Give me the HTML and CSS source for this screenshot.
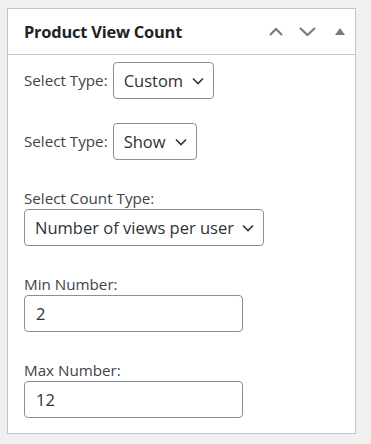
FILE: index.html
```html
<!DOCTYPE html>
<html>
<head>
<meta charset="utf-8">
<link rel="stylesheet" href="styles.css">
</head>
<body>
<div class="postbox">
  <div class="postbox-header">
    <h2 class="hndle">Product View Count</h2>
    <div class="handle-actions">
      <span class="hbtn up"><svg width="14" height="9" viewBox="0 0 14 9"><path d="M1 8 L7 2 L13 8" fill="none" stroke="#787c82" stroke-width="2.2"/></svg></span>
      <span class="hbtn down"><svg width="17" height="9" viewBox="0 0 17 9"><path d="M1 1 L8.5 8 L16 1" fill="none" stroke="#787c82" stroke-width="2.2"/></svg></span>
      <span class="hbtn toggle"><svg width="10" height="7" viewBox="0 0 10 7"><path d="M0 7 L5 0 L10 7 Z" fill="#787c82"/></svg></span>
    </div>
  </div>
  <div class="inside">
    <div class="row inline">
      <label class="lbl">Select Type:</label>
      <div class="select w-custom"><span>Custom</span><svg class="chev" width="12" height="8" viewBox="0 0 12 8"><path d="M1 1.5 L6 6.5 L11 1.5" fill="none" stroke="#2c3338" stroke-width="1.6"/></svg></div>
    </div>
    <div class="row inline second">
      <label class="lbl">Select Type:</label>
      <div class="select w-show"><span>Show</span><svg class="chev" width="12" height="8" viewBox="0 0 12 8"><path d="M1 1.5 L6 6.5 L11 1.5" fill="none" stroke="#2c3338" stroke-width="1.6"/></svg></div>
    </div>
    <div class="row stacked">
      <label class="lbl">Select Count Type:</label>
      <div class="select w-count"><span>Number of views per user</span><svg class="chev" width="12" height="8" viewBox="0 0 12 8"><path d="M1 1.5 L6 6.5 L11 1.5" fill="none" stroke="#2c3338" stroke-width="1.6"/></svg></div>
    </div>
    <div class="row stacked">
      <label class="lbl">Min Number:</label>
      <div class="input">2</div>
    </div>
    <div class="row stacked last">
      <label class="lbl">Max Number:</label>
      <div class="input">12</div>
    </div>
  </div>
</div>
</body>
</html>
```
FILE: styles.css
```css
html, body {
  margin: 0;
  padding: 0;
  background: #f0f0f1;
}
body {
  padding: 8px 15px 0 7px;
  font-family: "Open Sans", "Noto Sans", sans-serif;
  color: #3c434a;
}
.postbox {
  background: #fff;
  border: 1px solid #c3c4c7;
  box-shadow: 0 1px 1px rgba(0,0,0,0.04);
}
.postbox-header {
  height: 45px;
  border-bottom: 1px solid #c3c4c7;
  display: flex;
  align-items: center;
  justify-content: space-between;
}
.hndle {
  margin: 0;
  padding-left: 16px;
  font-size: 16.4px;
  font-weight: 700;
  color: #1d2327;
  letter-spacing: -0.2px;
}
.handle-actions {
  display: flex;
  align-items: center;
  padding-right: 10px;
}
.hbtn {
  display: flex;
  align-items: center;
  justify-content: center;
}
.hbtn.up { margin-right: 16px; }
.hbtn.down { margin-right: 19px; }
.inside {
  padding: 7px 16px 15px 16px;
}
.row.inline {
  display: flex;
  align-items: center;
  gap: 5px;
}
.row.second { margin-top: 24px; }
.row.stacked { margin-top: 27px; }
.lbl {
  font-size: 15.2px;
  line-height: 21px;
  color: #3c434a;
}
.select {
  box-sizing: border-box;
  height: 37px;
  border: 1px solid #8c8f94;
  border-radius: 4px;
  display: flex;
  align-items: center;
  justify-content: space-between;
  padding: 0 9px 0 10px;
  font-size: 16.5px;
  color: #2c3338;
  background: #fff;
}
.w-custom { width: 101px; }
.w-show { width: 84px; }
.w-count { width: 240px; }
.input {
  box-sizing: border-box;
  width: 219px;
  height: 37px;
  border: 1px solid #8c8f94;
  border-radius: 4px;
  display: flex;
  align-items: center;
  padding: 0 11px;
  font-size: 16.5px;
  color: #2c3338;
}
```
